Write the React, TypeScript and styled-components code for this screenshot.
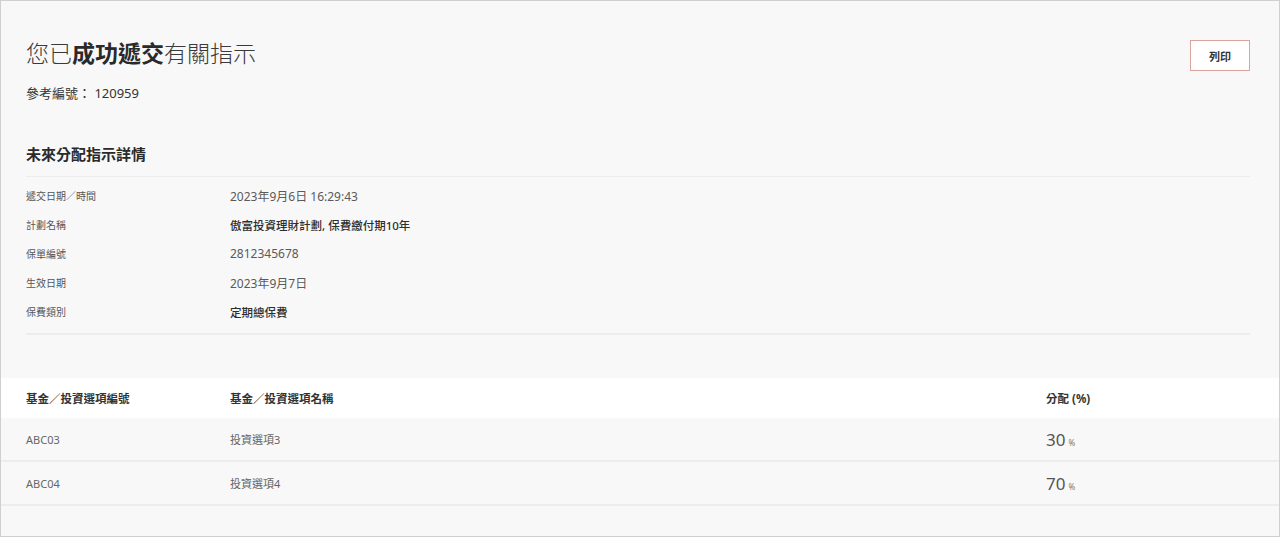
import React from 'react';
import styled, { createGlobalStyle } from 'styled-components';

const GlobalStyle = createGlobalStyle`
  html, body {
    margin: 0;
    padding: 0;
    background: #f8f8f8;
  }
  body {
    font-family: 'Noto Sans', 'Noto Sans CJK TC', sans-serif;
    color: #333;
  }
`;

interface Detail {
  label: string;
  value: string;
  strong?: boolean;
}

interface Fund {
  code: string;
  name: string;
  share: number;
}

const details: Detail[] = [
  { label: '遞交日期／時間', value: '2023年9月6日 16:29:43' },
  { label: '計劃名稱', value: '傲富投資理財計劃, 保費繳付期10年', strong: true },
  { label: '保單編號', value: '2812345678' },
  { label: '生效日期', value: '2023年9月7日' },
  { label: '保費類別', value: '定期總保費', strong: true },
];

const funds: Fund[] = [
  { code: 'ABC03', name: '投資選項3', share: 30 },
  { code: 'ABC04', name: '投資選項4', share: 70 },
];

const App: React.FC = () => {
  return (
    <Page>
      <GlobalStyle />
      <Header>
        <div>
          <Title>
            您已<b>成功遞交</b>有關指示
          </Title>
          <RefNo>參考編號： 120959</RefNo>
        </div>
        <PrintButton>列印</PrintButton>
      </Header>

      <Section>
        <SectionTitle>未來分配指示詳情</SectionTitle>
        <DetailList>
          {details.map((d) => (
            <DetailRow key={d.label}>
              <Label>{d.label}</Label>
              <Value strong={d.strong}>{d.value}</Value>
            </DetailRow>
          ))}
        </DetailList>
      </Section>

      <Table>
        <HeadRow>
          <HeadCell>基金／投資選項編號</HeadCell>
          <HeadCell>基金／投資選項名稱</HeadCell>
          <HeadCell>分配 (%)</HeadCell>
        </HeadRow>
        {funds.map((f) => (
          <BodyRow key={f.code}>
            <Cell>{f.code}</Cell>
            <Cell>{f.name}</Cell>
            <Share>
              {f.share}
              <small>%</small>
            </Share>
          </BodyRow>
        ))}
      </Table>
    </Page>
  );
};

export default App;

const Page = styled.div`
  box-sizing: border-box;
  width: 1280px;
  height: 537px;
  border: 1px solid #cfcfcf;
  background: #f8f8f8;
  overflow: hidden;
`;

const Header = styled.div`
  display: flex;
  justify-content: space-between;
  align-items: flex-start;
  padding: 39px 29px 0 25px;
`;

const Title = styled.h1`
  margin: -2px 0 0;
  font-size: 23px;
  line-height: 30px;
  font-weight: 300;
  color: #3a3a3a;

  b {
    font-weight: 700;
    color: #2a2a2a;
  }
`;

const RefNo = styled.div`
  margin-top: 16px;
  font-size: 13px;
  line-height: 18px;
  color: #333;
`;

const PrintButton = styled.button`
  width: 60px;
  height: 31px;
  box-sizing: border-box;
  border: 1px solid #d9a4a0;
  background: #fff;
  font-family: inherit;
  font-size: 11px;
  font-weight: 700;
  color: #333;
  cursor: pointer;
`;

const Section = styled.div`
  padding: 0 29px 0 25px;
`;

const SectionTitle = styled.h2`
  margin: 42px 0 0;
  padding-bottom: 12px;
  font-size: 15px;
  line-height: 20px;
  font-weight: 700;
  color: #2a2a2a;
  border-bottom: 1px solid #ececec;
`;

const DetailList = styled.div`
  padding: 4px 0 7px;
  border-bottom: 2px solid #ededed;
`;

const DetailRow = styled.div`
  display: grid;
  grid-template-columns: 204px 1fr;
  align-items: center;
  height: 29px;
`;

const Label = styled.div`
  font-size: 10px;
  color: #555;
`;

const Value = styled.div<{ strong?: boolean }>`
  font-size: ${(p) => (p.strong ? '11.5px' : '12px')};
  font-weight: ${(p) => (p.strong ? 500 : 400)};
  color: ${(p) => (p.strong ? '#2e2e2e' : '#5a5a5a')};
`;

const Table = styled.div`
  margin-top: 43px;
`;

const HeadRow = styled.div`
  display: grid;
  grid-template-columns: 204px 816px 1fr;
  align-items: center;
  height: 40px;
  padding-left: 25px;
  background: #fff;
`;

const HeadCell = styled.div`
  font-size: 11.5px;
  font-weight: 700;
  color: #333;
`;

const BodyRow = styled.div`
  display: grid;
  grid-template-columns: 204px 816px 1fr;
  align-items: center;
  height: 42px;
  padding-left: 25px;
  border-bottom: 2px solid #ededed;
`;

const Cell = styled.div`
  font-size: 11px;
  color: #666;
`;

const Share = styled.div`
  font-size: 17px;
  color: #555;

  small {
    margin-left: 3px;
    font-size: 8px;
    color: #777;
  }
`;
